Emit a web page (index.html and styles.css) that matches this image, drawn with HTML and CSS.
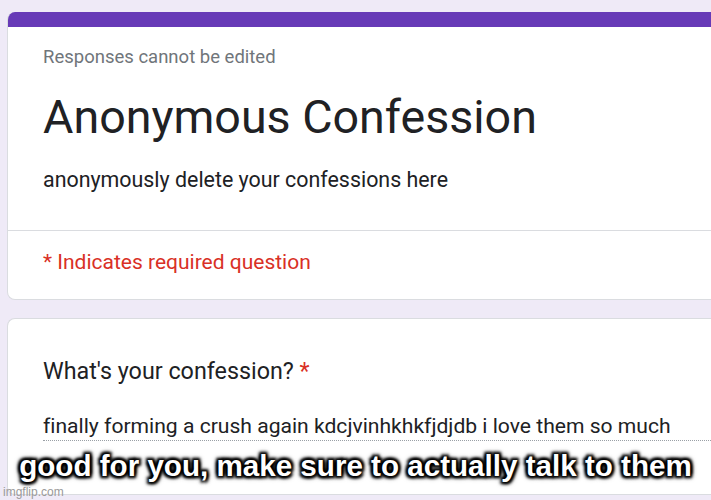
FILE: index.html
```html
<!DOCTYPE html>
<html>
<head>
<meta charset="utf-8">
<link rel="stylesheet" href="styles.css">
</head>
<body>
<div class="page">
  <div class="card header-card">
    <div class="band"></div>
    <div class="header-main">
      <div class="note">Responses cannot be edited</div>
      <h1 class="title">Anonymous Confession</h1>
      <div class="desc">anonymously delete your confessions here</div>
    </div>
    <div class="required">* Indicates required question</div>
  </div>
  <div class="card question-card">
    <div class="question">What's your confession? <span class="star">*</span></div>
    <div class="answer">finally forming a crush again kdcjvinhkhkfjdjdb i love them so much</div>
  </div>
</div>
<div class="caption">good for you, make sure to actually talk to them</div>
<div class="watermark">imgflip.com</div>
</body>
</html>
```
FILE: styles.css
```css
html, body {
  margin: 0;
  padding: 0;
}
body {
  width: 711px;
  height: 500px;
  overflow: hidden;
  background: #efeaf7;
  font-family: Roboto, "Liberation Sans", sans-serif;
  font-variant-ligatures: none;
  position: relative;
}
.page {
  padding: 12px 0 0 7px;
  display: flex;
  flex-direction: column;
  gap: 18px;
}
.card {
  background: #fff;
  border-radius: 8px 0 0 8px;
  border: 1px solid #dadce0;
  border-right: none;
}
.header-card {
  overflow: hidden;
  border-top: none;
  height: 288px;
  box-sizing: border-box;
}
.band {
  height: 15px;
  background: #673ab7;
}
.header-main {
  padding: 18px 0 0 35px;
  height: 204px;
  box-sizing: border-box;
  border-bottom: 1px solid #dadce0;
}
.note {
  font-size: 18.5px;
  color: #70757a;
  line-height: 24px;
}
.title {
  margin: 20px 0 0;
  font-weight: 400;
  font-size: 46.6px;
  line-height: 56px;
  color: #202124;
}
.desc {
  margin-top: 21px;
  font-size: 21.4px;
  line-height: 28px;
  color: #202124;
}
.required {
  padding: 17px 0 0 35px;
  font-size: 21px;
  line-height: 28px;
  color: #d93025;
}
.question-card {
  height: 177px;
  box-sizing: border-box;
  padding: 37px 0 0 35px;
}
.question {
  font-size: 23.3px;
  line-height: 30px;
  color: #202124;
}
.star {
  color: #d93025;
}
.answer {
  margin-top: 26px;
  font-size: 21.1px;
  line-height: 28px;
  color: #202124;
  padding-bottom: 0;
  border-bottom: 1px dotted #9aa0a6;
}
.caption {
  position: absolute;
  left: 0;
  right: 0;
  top: 448px;
  text-align: center;
  font-family: "Liberation Sans", Arial, sans-serif;
  font-weight: 700;
  font-size: 29.6px;
  line-height: 36px;
  color: #fff;
  text-shadow: 0 0 2px #000, 0 0 3px #000, 0 0 4px #000, 0 0 6px #000, 2px 2px 3px #000, -2px -2px 3px #000, 2px -2px 3px #000, -2px 2px 3px #000;
}
.watermark {
  position: absolute;
  left: 3px;
  bottom: 1px;
  font-family: "Liberation Sans", Arial, sans-serif;
  font-size: 12px;
  color: #9a9a9a;
}
```
